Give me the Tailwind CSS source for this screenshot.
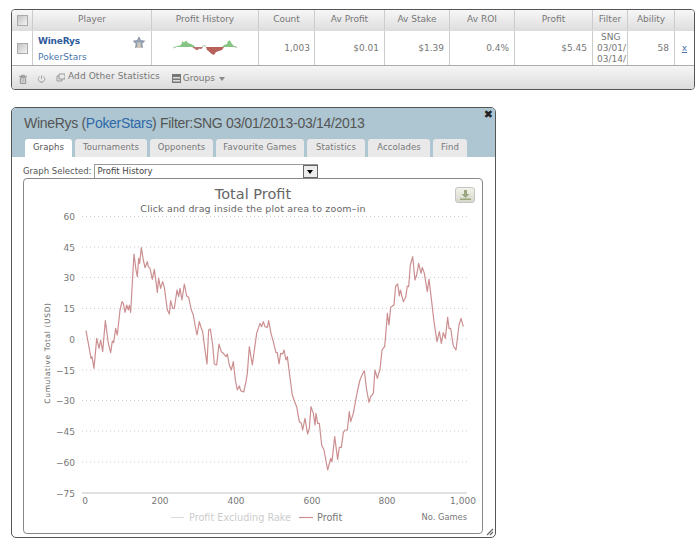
<!DOCTYPE html>
<html lang="en">
  <head>
    <meta charset="UTF-8" />
    <script src="https://cdn.jsdelivr.net/npm/@tailwindcss/browser@4"></script>
  </head>
  <body class="bg-white w-[700px] h-[556px] overflow-hidden font-['DejaVu_Sans',sans-serif] text-[9px] text-[#777]">
    <div class="pt-[9px] pl-[11px]">
      <!-- players table -->
      <div class="w-[684px] h-[81px] border border-[#555] rounded-[4px] overflow-hidden flex flex-col">
        <div class="h-[21px] flex bg-gradient-to-b from-[#f7f7f7] to-[#dedede] border-b border-[#ddd] text-center items-stretch">
          <div class="w-[21px] border-r border-[#ccc] flex items-center justify-center">
            <span class="w-[11px] h-[11px] border border-[#aaa] bg-gradient-to-br from-[#c4c4c4] to-[#f4f4f4]"></span>
          </div>
          <div class="w-[119px] border-r border-[#ccc] leading-[18px]">Player</div>
          <div class="w-[107px] border-r border-[#ccc] leading-[18px]">Profit History</div>
          <div class="w-[56px] border-r border-[#ccc] leading-[18px]">Count</div>
          <div class="w-[70px] border-r border-[#ccc] leading-[18px]">Av Profit</div>
          <div class="w-[65px] border-r border-[#ccc] leading-[18px]">Av Stake</div>
          <div class="w-[65px] border-r border-[#ccc] leading-[18px]">Av ROI</div>
          <div class="w-[78px] border-r border-[#ccc] leading-[18px]">Profit</div>
          <div class="w-[35px] border-r border-[#ccc] leading-[18px]">Filter</div>
          <div class="w-[47px] border-r border-[#ccc] leading-[18px]">Ability</div>
          <div class="flex-1"></div>
        </div>
        <div class="h-[35px] flex bg-white border-b border-[#aaa] items-stretch">
          <div class="w-[21px] border-r border-[#ccc] flex items-center justify-center">
            <span class="w-[11px] h-[11px] border border-[#aaa] bg-gradient-to-br from-[#c4c4c4] to-[#f4f4f4]"></span>
          </div>
          <div class="w-[119px] border-r border-[#ccc] pl-[5px] pr-[6px] flex justify-between">
            <div class="flex flex-col pt-[5px] gap-[5px]">
              <span class="font-bold text-[#2f5c9e] leading-[11px] tracking-[-0.2px]">WineRys</span>
              <span class="text-[#4a76ad] leading-[11px] tracking-[0.1px]">PokerStars</span>
            </div>
            <svg class="mt-[5px]" width="12" height="13" viewBox="0 0 14 15">
              <path d="M7 1l2 4.200 4.600.6-3.300 3.200.8 4.600L7 11.400 2.900 13.600l.8-4.600L.4 5.800 5 5.200z" fill="#94a5ba" stroke="#778" stroke-width=".7" />
              <path d="M5 7.500h4V14H5z" fill="#cfc8b8" />
            </svg>
          </div>
          <div class="w-[107px] border-r border-[#ccc] flex items-center justify-center">
            <svg width="64" height="20" viewBox="0 0 64 20">
              <path d="M1 9L5 8 8 7 9.500 3 11 4.500 13 2.500 15 5 18 6 21 7.500 22 9z" fill="#86c584" />
              <path d="M19 9H30L28.500 11 26 10.800 24 12.500 22 11z" fill="#b8736d" />
              <path d="M33 9H51L49 12 46 13 43 14 41 17 38 15.500 36 13.500 34 12z" fill="#b8605a" />
              <path d="M49 9L51 7 54 6 55 3 57 2.500 59 6 61 8 64 9z" fill="#86c584" />
              <path d="M0 10L3 9M61 8.500L64 9.500M29 8.500L31 7.500 33 8.500" fill="none" stroke="#8aa88a" stroke-width=".7" />
            </svg>
          </div>
          <div class="w-[56px] border-r border-[#ccc] text-right pr-[4px] leading-[35px]">1,003</div>
          <div class="w-[70px] border-r border-[#ccc] text-right pr-[5px] leading-[35px]">$0.01</div>
          <div class="w-[65px] border-r border-[#ccc] text-right pr-[5px] leading-[35px]">$1.39</div>
          <div class="w-[65px] border-r border-[#ccc] text-right pr-[5px] leading-[35px]">0.4%</div>
          <div class="w-[78px] border-r border-[#ccc] text-right pr-[5px] leading-[35px]">$5.45</div>
          <div class="w-[35px] border-r border-[#ccc] pl-[4px] leading-[11px] pt-[1px] whitespace-nowrap">
            <div class="pl-[4px]">SNG</div>
            <div>03/01/</div>
            <div>03/14/</div>
          </div>
          <div class="w-[47px] border-r border-[#ccc] text-right pr-[5px] leading-[35px]">58</div>
          <div class="flex-1 text-center leading-[35px] text-[#4a76ad] underline">x</div>
        </div>
        <div class="flex-1 bg-gradient-to-b from-[#f6f6f6] to-[#dcdcdc] flex items-center pl-[7px]">
          <svg width="8" height="10" viewBox="0 0 9 10" class="mt-[2px]">
            <path d="M0 2h9M3 2V.8h3V2M1.500 3.500h6V10h-6z" fill="none" stroke="#888" />
            <path d="M3.500 4v5M5.500 4v5" stroke="#888" stroke-width=".7" />
          </svg>
          <svg width="9" height="10" viewBox="0 0 10 10" class="ml-[10px] mt-[2px]">
            <path d="M3 2A3.600 3.600 0 1 0 7 2M5 1v4M3.500 7.500l1.500 1.500 1.500-1.500" fill="none" stroke="#999" stroke-width=".9" />
          </svg>
          <svg width="9" height="9" viewBox="0 0 9 9" class="ml-[10px]">
            <path d="M3 1h6v5H3zM3 3H1v5h5V6" fill="none" stroke="#999" />
          </svg>
          <span class="ml-[3px] -mt-[1px] tracking-[0.1px]">Add Other Statistics</span>
          <svg width="9" height="9" viewBox="0 0 9 9" class="ml-[12px] mt-[2px]">
            <path d="M0 0h9v9H0z" fill="#777" />
            <path d="M1 3h7v1.500H1zM1 6h7v1.500H1z" fill="#ddd" />
          </svg>
          <span class="ml-[2px] mt-[2px]">Groups</span>
          <span class="ml-[4px] mt-[2px] w-0 h-0 border-x-[3px] border-x-transparent border-t-[4px] border-t-[#888]"></span>
        </div>
      </div>

      <!-- player dialog -->
      <div class="mt-[17px] w-[485px] h-[431px] border border-[#555] rounded-[5px] overflow-hidden bg-white relative flex flex-col">
        <div class="h-[49px] bg-[#adc6d1] pl-[12px] relative">
          <div class="pt-[5px] text-[14px] leading-[20px] tracking-[-0.3px] text-[#555] font-['Liberation_Sans',sans-serif]">
            WineRys (<span class="text-[#2f68a8]">PokerStars</span>) Filter:SNG 03/01/2013-03/14/2013
          </div>
          <span class="absolute top-[1px] right-[2px] text-[11px] leading-[11px] font-bold text-[#222]">✖</span>
          <div class="absolute bottom-0 left-[13px] flex gap-[3px] text-[8.500px] tracking-[0.1px]">
            <span class="w-[47px] h-[18px] bg-white rounded-t-[3px] text-center leading-[17px] text-[#555]">Graphs</span>
            <span class="w-[72px] h-[18px] bg-[#e9e9e9] rounded-t-[3px] text-center leading-[17px]">Tournaments</span>
            <span class="w-[63px] h-[18px] bg-[#e9e9e9] rounded-t-[3px] text-center leading-[17px]">Opponents</span>
            <span class="w-[88px] h-[18px] bg-[#e9e9e9] rounded-t-[3px] text-center leading-[17px]">Favourite Games</span>
            <span class="w-[58px] h-[18px] bg-[#e9e9e9] rounded-t-[3px] text-center leading-[17px]">Statistics</span>
            <span class="w-[62px] h-[18px] bg-[#e9e9e9] rounded-t-[3px] text-center leading-[17px]">Accolades</span>
            <span class="w-[34px] h-[18px] bg-[#e9e9e9] rounded-t-[3px] text-center leading-[17px]">Find</span>
          </div>
        </div>
        <div class="flex items-center pl-[11px] h-[14px] mt-[7px] text-[#555] text-[8.500px]">
          <span>Graph Selected:</span>
          <div class="ml-[2px] w-[224px] h-[14px] border border-[#999] border-r-0 border-b-0 bg-white flex justify-between pl-[3px] leading-[13px] text-[#444]">
            <span>Profit History</span>
            <span class="w-[15px] h-[13px] bg-[#ececec] border border-[#666] flex items-center justify-center">
              <span class="w-0 h-0 border-x-[3px] border-x-transparent border-t-[4px] border-t-black"></span>
            </span>
          </div>
        </div>

        <!-- chart panel -->
        <div class="absolute left-[11px] top-[70px] w-[460px] h-[356px] border border-[#888] rounded-[4px] bg-white">
          <div class="text-center text-[14.500px] leading-[16px] pt-[7px] text-[#666]">Total Profit</div>
          <div class="text-center text-[9.500px] leading-[12px] text-[#666] mt-[1px] tracking-[0.15px]">Click and drag inside the plot area to zoom–in</div>
          <div class="absolute top-[8px] right-[7px] w-[20px] h-[16px] rounded-[3px] border border-[#c4c4c4] bg-gradient-to-b from-[#f2f2ea] to-[#d8d8cc] flex items-center justify-center">
            <svg width="11" height="10" viewBox="0 0 11 10">
              <path d="M4 0h3v4h2.500L5.500 8 1.500 4H4zM0 8.500h11V10H0z" fill="#9aa77f" />
            </svg>
          </div>
          <!-- plot: svg origin is page (24,179) -->
          <svg class="absolute left-0 top-0" width="458" height="354" viewBox="24 179 458 354" font-family="'DejaVu Sans', sans-serif">
            <g stroke="#ccc" stroke-width="1" stroke-dasharray="1 3">
              <path d="M82 216.500H467M82 247H467M82 277.500H467M82 308.500H467M82 339H467M82 370H467M82 400.500H467M82 431H467M82 462H467" />
            </g>
            <path d="M82 493H467" stroke="#e2e2e2" stroke-width="2" />
            <g font-size="9" fill="#777" text-anchor="end">
              <text x="75" y="220">60</text>
              <text x="75" y="251">45</text>
              <text x="75" y="281">30</text>
              <text x="75" y="312">15</text>
              <text x="75" y="343">0</text>
              <text x="75" y="374">−15</text>
              <text x="75" y="404">−30</text>
              <text x="75" y="435">−45</text>
              <text x="75" y="466">−60</text>
              <text x="75" y="497">−75</text>
            </g>
            <g font-size="9" fill="#777" text-anchor="middle">
              <text x="85" y="504">0</text>
              <text x="160" y="504">200</text>
              <text x="236" y="504">400</text>
              <text x="312" y="504">600</text>
              <text x="387" y="504">800</text>
              <text x="463" y="504">1,000</text>
            </g>
            <text transform="translate(50 353) rotate(-90)" font-size="7.500" letter-spacing=".65" fill="#666" text-anchor="middle">Cumulative Total (USD)</text>
            <g transform="translate(30 210) scale(.33333)">
              <polyline fill="none" stroke="#cc8f91" stroke-width="3.600" stroke-linejoin="round" points="168,362 175,400 183,445 186,440 192,475 197,420 200,385 207,415 212,390 218,425 226,332 235,400 242,428 247,393 251,398 257,355 262,375 270,300 276,275 280,280 285,307 290,285 295,300 298,285 302,307 308,200 312,132 318,180 322,200 326,145 329,160 334,113 340,150 345,173 352,155 355,170 360,175 367,208 373,178 378,215 382,247 386,205 392,235 398,215 403,232 412,300 418,312 422,272 428,295 433,295 441,240 446,260 450,235 456,270 463,222 470,258 476,262 484,300 490,315 495,345 501,375 508,335 514,355 518,365 525,420 531,462 536,360 541,357 548,405 553,462 560,465 567,402 574,425 580,430 588,440 592,432 598,465 604,480 610,455 616,510 622,540 628,528 632,542 641,546 648,515 652,490 658,410 667,465 680,370 690,340 695,350 700,335 705,350 712,352 716,332 723,370 730,395 738,428 742,428 747,462 752,430 758,432 762,420 768,450 772,440 777,480 787,555 792,570 800,590 808,635 814,640 818,660 825,625 833,672 838,655 843,590 850,610 855,645 858,610 863,640 868,640 875,705 882,720 893,780 902,745 906,755 914,680 923,748 928,712 934,712 940,668 945,660 952,660 958,605 962,635 970,610 978,565 983,540 990,510 996,495 1003,482 1010,540 1017,577 1022,560 1030,550 1035,480 1042,505 1050,478 1056,420 1064,410 1070,340 1072,310 1077,345 1082,292 1092,285 1097,228 1103,222 1108,258 1111,240 1120,275 1127,262 1132,228 1136,230 1141,165 1148,140 1155,210 1160,195 1166,160 1173,190 1177,172 1183,190 1192,245 1197,207 1205,275 1212,335 1221,395 1228,365 1234,400 1240,368 1246,385 1253,322 1257,355 1262,355 1270,408 1278,420 1287,345 1293,325 1300,350" />
            </g>
            <path d="M171 517.500h13" stroke="#ddd" stroke-width="1.200" />
            <text x="189" y="521" font-size="9.700" fill="#ccc">Profit Excluding Rake</text>
            <path d="M299 517.500h14" stroke="#cc8f91" stroke-width="1.200" />
            <text x="317" y="521" font-size="9.700" fill="#777">Profit</text>
            <text x="467" y="520" font-size="8.300" fill="#777" text-anchor="end">No. Games</text>
          </svg>
        </div>
        <svg class="absolute right-[1px] bottom-[1px]" width="8" height="8" viewBox="0 0 8 8">
          <path d="M7 1L1 7M7 4L4 7" stroke="#666" stroke-width="1.200" />
        </svg>
      </div>
    </div>
  </body>
</html>
